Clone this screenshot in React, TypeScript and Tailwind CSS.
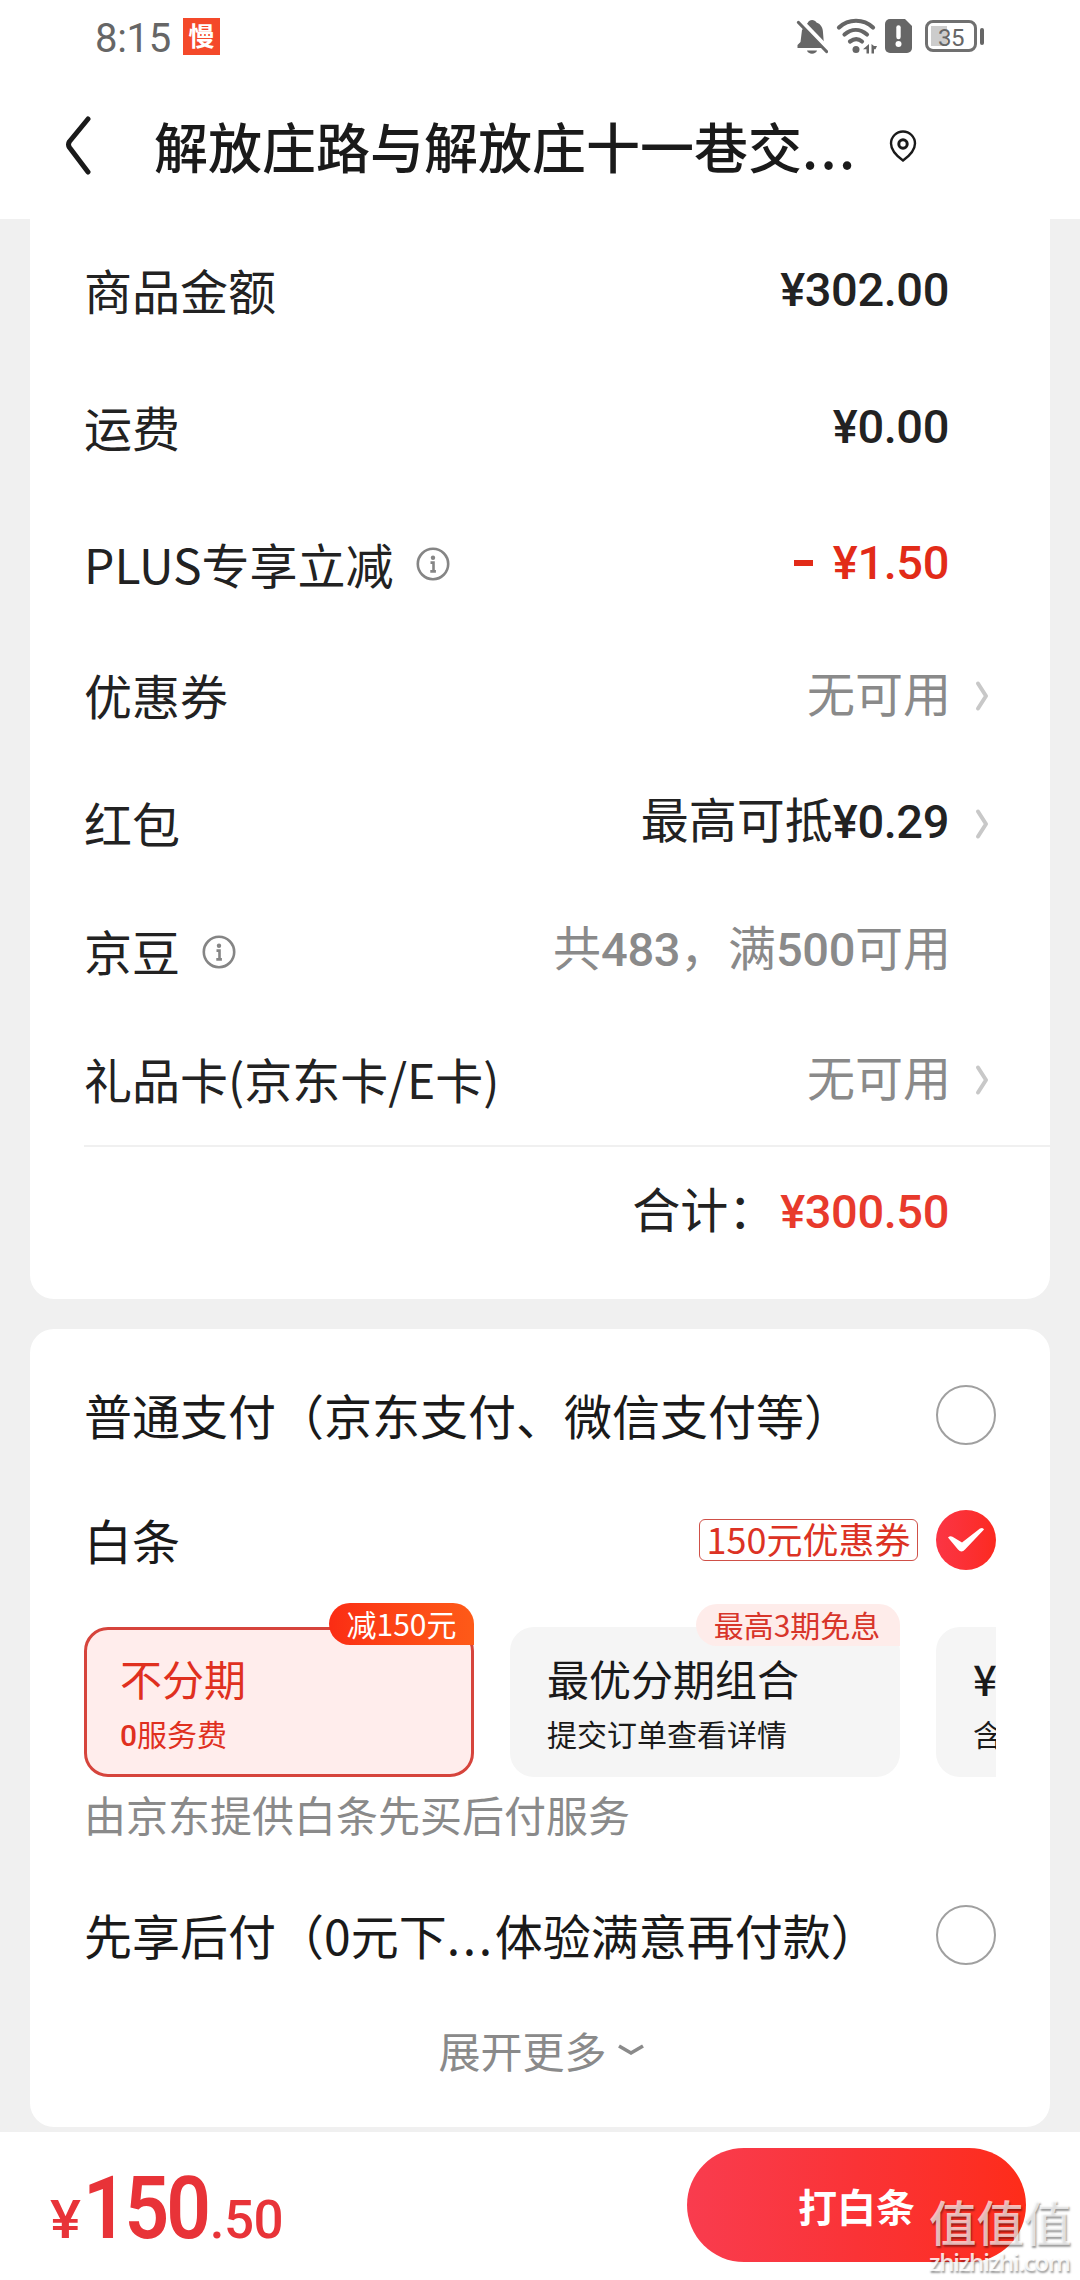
import type { ReactNode } from 'react';
import clsx from 'clsx';

type AmountRow = {
  label: string;
  value: ReactNode;
  info?: boolean;
  arrow?: boolean;
  muted?: boolean;
  tall?: boolean;
};

function Num({ children }: { children: ReactNode }) {
  return (
    <span className="font-['Roboto','Noto_Sans_CJK_SC',sans-serif] text-[47px] font-medium tracking-[-0.4px]">
      {children}
    </span>
  );
}

const amountRows: AmountRow[] = [
  { label: '商品金额', value: <Num>¥302.00</Num>, tall: true },
  { label: '运费', value: <Num>¥0.00</Num>, tall: true },
  {
    label: 'PLUS专享立减',
    value: (
      <span className="flex items-center gap-[20px] pt-[3px] text-[#e22b18]">
        <i className="h-[6px] w-[19px] bg-[#e22b18]" />
        <Num>¥1.50</Num>
      </span>
    ),
    info: true,
    tall: true,
  },
  { label: '优惠券', value: '无可用', arrow: true, muted: true },
  { label: '红包', value: <>最高可抵<Num>¥0.29</Num></>, arrow: true },
  { label: '京豆', value: <>共<Num>483</Num>，满<Num>500</Num>可用</>, info: true, muted: true },
  { label: '礼品卡(京东卡/E卡)', value: '无可用', arrow: true, muted: true },
];

function InfoIcon() {
  return (
    <svg width="34" height="34" viewBox="0 0 34 34" fill="none" stroke="#858585" strokeWidth="2.6">
      <circle cx="17" cy="17" r="15.2" />
      <circle cx="17" cy="10.8" r="2.2" fill="#858585" stroke="none" />
      <path d="M14.5 15.600h3v8.500M14.300 24.400h5.600" />
    </svg>
  );
}

function ArrowIcon() {
  return (
    <svg width="14" height="32" viewBox="0 0 14 32" fill="none" stroke="#c8c8c8" strokeWidth="4" strokeLinecap="round" strokeLinejoin="round">
      <path d="M3 3.500l8 12.500-8 12.500" />
    </svg>
  );
}

function StatusBar() {
  return (
    <div className="flex h-[72px] items-center pl-[95px] pr-[96px] text-[#666]">
      <span className="mt-[6px] w-[88px] font-['Roboto',sans-serif] text-[40px] leading-none tracking-[-0.3px]">8:15</span>
      <span className="flex size-[37px] items-center justify-center bg-[#f4492a] pb-[2px] text-[26px] leading-none font-bold text-white">慢</span>
      <div className="ml-auto flex items-center">
        <svg width="32" height="36" viewBox="0 0 32 36">
          <path d="M12 4.500C13 1 19 1 20.500 4.500 25 6 27 10 27 14.500L28 27l2.500 3H1.500v-3l3-3L6 12z" fill="#666" />
          <path d="M4.500 2.500l28 29" stroke="#fff" strokeWidth="5" />
          <path d="M2.500 4.500l28 29" stroke="#666" strokeWidth="3.200" strokeLinecap="round" />
          <path d="M11 32.500h10c-1 4.200-9 4.200-10 0z" fill="#666" />
        </svg>
        <svg className="ml-[8px]" width="41" height="36" viewBox="0 0 41 36" fill="none" stroke="#666" strokeWidth="4.200" strokeLinecap="round">
          <path d="M3 9.500C12.500 .5 27.500 .5 37 9.500" />
          <path d="M8.500 16.500c7-6 15.500-6 22.500 0" />
          <path d="M14 23.500c4-3 8.500-3 12 0" />
          <circle cx="20" cy="31.500" r="3.500" fill="#666" stroke="none" />
          <path d="M33 26v9.500h-2.500v-4.200h-3.500zM35.500 26v9.500H38v-4.200h1.500l1.500-3.300h-3z" fill="#666" stroke="none" />
        </svg>
        <svg className="ml-[8px]" width="27" height="34" viewBox="0 0 27 34">
          <path d="M5 0h15l7 7v22a5 5 0 0 1-5 5H5a5 5 0 0 1-5-5V5a5 5 0 0 1 5-5z" fill="#666" />
          <path d="M13.500 8.500v9.500" stroke="#fff" strokeWidth="4.400" strokeLinecap="round" />
          <circle cx="13.500" cy="25" r="3" fill="#fff" />
        </svg>
        <div className="ml-[13px] flex h-[32px] w-[52px] items-center rounded-[8px] border-[3px] border-[#707070] bg-[linear-gradient(#ccc,#ccc)] bg-[length:16px_20px] bg-[position:3px_3px] bg-no-repeat pl-[10px]">
          <span className="mt-[3px] font-['Roboto',sans-serif] text-[24px] leading-none tracking-[-0.5px]">35</span>
        </div>
        <i className="ml-[3px] h-[17px] w-[4px] rounded-sm bg-[#666]" />
      </div>
    </div>
  );
}

function Header() {
  return (
    <header className="flex h-[147px] items-center pb-[1px] pl-[64px]">
      <svg width="28" height="60" viewBox="0 0 28 60" fill="none" stroke="#1a1a1a" strokeWidth="5" strokeLinecap="round" strokeLinejoin="round">
        <path d="M24 4L5.500 26.500q-2 3 0 6L24 57" />
      </svg>
      <h1 className="mt-[2px] ml-[62px] text-[54px] leading-none font-medium whitespace-nowrap text-[#1a1a1a]">
        解放庄路与解放庄十一巷交<span className="tracking-[2.4px]">...</span>
      </h1>
      <svg className="mt-[2px] ml-[32px]" width="28" height="32" viewBox="0 0 28 32" fill="none" stroke="#1a1a1a" strokeWidth="2.400">
        <path d="M14 30.500C10.500 28 2 21 2 13.500a12 12 0 0 1 24 0C26 21 17.500 28 14 30.500z" />
        <circle cx="14" cy="14" r="4.200" strokeWidth="3" />
      </svg>
    </header>
  );
}

function AmountCard() {
  return (
    <section className="mx-[30px] h-[1080px] rounded-b-[24px] bg-white pt-[3px] pl-[54px] text-[48px] leading-none text-[#222]">
      {amountRows.map((row) => (
        <div key={row.label} className={clsx('flex items-center pr-[61px]', row.tall ? 'h-[137px]' : 'h-[128px]')}>
          <span className={clsx('whitespace-nowrap', row.tall ? 'mb-[3px]' : 'mb-[6px]')}>{row.label}</span>
          {row.info && <span className="mb-[2px] ml-[22px]"><InfoIcon /></span>}
          <span
            className={clsx(
              'ml-auto whitespace-nowrap',
              row.tall ? 'mb-[7px]' : 'mb-[12px]',
              row.muted && 'translate-x-[2px] text-[#8a8a8a]',
            )}
          >
            {row.value}
          </span>
          <span className="mb-[2px] ml-[26px] w-[14px]">{row.arrow && <ArrowIcon />}</span>
        </div>
      ))}
      <div className="flex h-[130px] items-center justify-end border-t-2 border-[#f0f0f0] pr-[101px]">
        <span className="mr-[4px] mb-[9px]">合计：</span>
        <span className="mb-[4px] text-[#e83a2c]"><Num>¥300.50</Num></span>
      </div>
    </section>
  );
}

function Radio({ checked }: { checked?: boolean }) {
  if (!checked) return <span className="size-[60px] rounded-full border-2 border-[#a0a0a0]" />;
  return (
    <span className="flex size-[60px] items-center justify-center rounded-full bg-linear-to-r from-[#fb3544] to-[#fc2a1f]">
      <svg width="60" height="60" viewBox="0 0 60 60">
        <path d="M12 27.500q2-2 4.500-.8L26 32.500 44 18.500q3-1.500 4 1L29 39.500q-3.500 4-7 0z" fill="#fff" />
      </svg>
    </span>
  );
}

function PayOption({ title, desc, tag, active }: { title: ReactNode; desc: ReactNode; tag?: string; active?: boolean }) {
  return (
    <div
      className={clsx(
        'relative h-[150px] w-[390px] shrink-0 rounded-[24px] leading-none whitespace-nowrap',
        active ? 'border-[3px] border-[#d6443c] bg-[#ffedec] pt-[27px] pl-[33px] text-[#e0301f]' : 'bg-[#f5f5f5] pt-[30px] pl-[37px] text-[#1a1a1a]',
      )}
    >
      <p className="text-[42px]">{title}</p>
      <p className="mt-[19px] text-[30px]">{desc}</p>
      {tag && (
        <span
          className={clsx(
            'absolute flex h-[42px] items-center justify-center rounded-l-[21px] rounded-tr-[21px] pb-[2px] text-[30px]',
            active
              ? '-top-[27px] -right-[3px] w-[145px] bg-linear-to-r from-[#fb2c14] to-[#fe5a18] text-white'
              : '-top-[23px] right-0 w-[204px] bg-[#feecea] pr-[2px] text-[#d8352a]',
          )}
        >
          {tag}
        </span>
      )}
    </div>
  );
}

function PaymentCard() {
  return (
    <section className="mx-[30px] mt-[30px] h-[798px] rounded-[24px] bg-white px-[54px] pt-[24px] text-[48px] leading-none text-[#1a1a1a]">
      <div className="flex h-[124px] items-center justify-between">
        <span className="mb-[2px] whitespace-nowrap">普通支付（京东支付、微信支付等）</span>
        <Radio />
      </div>
      <div className="flex h-[126px] items-center">
        <span className="mb-[2px]">白条</span>
        <span className="mr-[18px] ml-auto flex h-[42px] w-[219px] items-center justify-center rounded-[6px] border border-[#cf5048] pb-[4px] text-[36px] text-[#dc3224]">
          150元优惠券
        </span>
        <Radio checked />
      </div>
      <div className="flex gap-[36px] overflow-hidden pt-[24px]">
        <PayOption
          active
          title="不分期"
          desc={<><b className="font-['Roboto',sans-serif] font-medium">0</b>服务费</>}
          tag="减150元"
        />
        <PayOption title="最优分期组合" desc="提交订单查看详情" tag="最高3期免息" />
        <PayOption title={<b className="font-medium">¥</b>} desc="含" />
      </div>
      <p className="mt-[16px] text-[42px] text-[#8a8a8a]">由京东提供白条先买后付服务</p>
      <div className="mt-[38px] flex h-[124px] items-center justify-between">
        <span className="mb-[2px] whitespace-nowrap">先享后付（0元下<span className="tracking-[2.700px]">...</span>体验满意再付款）</span>
        <Radio />
      </div>
      <div className="mt-[32px] flex items-center justify-center pl-[3px] text-[42px] text-[#8a8a8a]">
        展开更多
        <svg className="ml-[10px]" width="28" height="14" viewBox="0 0 28 14" fill="none" stroke="#8a8a8a" strokeWidth="3.600">
          <path d="M2 3l12 7 12-7" />
        </svg>
      </div>
    </section>
  );
}

function SubmitBar() {
  return (
    <footer className="mt-[5px] flex h-[148px] items-start justify-between bg-white pt-[16px] pr-[54px] pl-[50px]">
      <div className="flex items-baseline pt-[30px] font-['Roboto',sans-serif] leading-none font-semibold text-[#e83338]">
        <span className="-mr-[3px] origin-left scale-x-110 text-[53px] font-medium">¥</span>
        <span className="-mr-[14px] ml-[8px] origin-left scale-x-90 text-[87px] leading-[60px] tracking-[-3.500px]">150</span>
        <span className="ml-[2px] text-[53px] font-medium tracking-[-0.5px]">.50</span>
      </div>
      <button className="h-[114px] w-[339px] rounded-full bg-linear-to-r from-[#f93c4e] via-[#fa3336] to-[#fe2c18] text-[39px] leading-none font-bold text-white">
        打白条
      </button>
    </footer>
  );
}

function Watermark() {
  return (
    <div className="absolute top-[2197px] left-[929px] text-white/70 [text-shadow:1px_2px_2px_rgba(0,0,0,0.4)]">
      <p className="text-[47.500px] leading-[48px] font-medium">值值值</p>
      <p className="mt-[5px] font-['Open_Sans',sans-serif] text-[24px] leading-[24px] font-semibold tracking-[-1.200px] text-white/85">zhizhizhi.com</p>
    </div>
  );
}

export default function App() {
  return (
    <div className="relative h-[2280px] w-[1080px] overflow-hidden bg-[#f0f0f0] font-['Noto_Sans_CJK_SC',sans-serif]">
      <div className="bg-white">
        <StatusBar />
        <Header />
      </div>
      <AmountCard />
      <PaymentCard />
      <SubmitBar />
      <Watermark />
    </div>
  );
}
